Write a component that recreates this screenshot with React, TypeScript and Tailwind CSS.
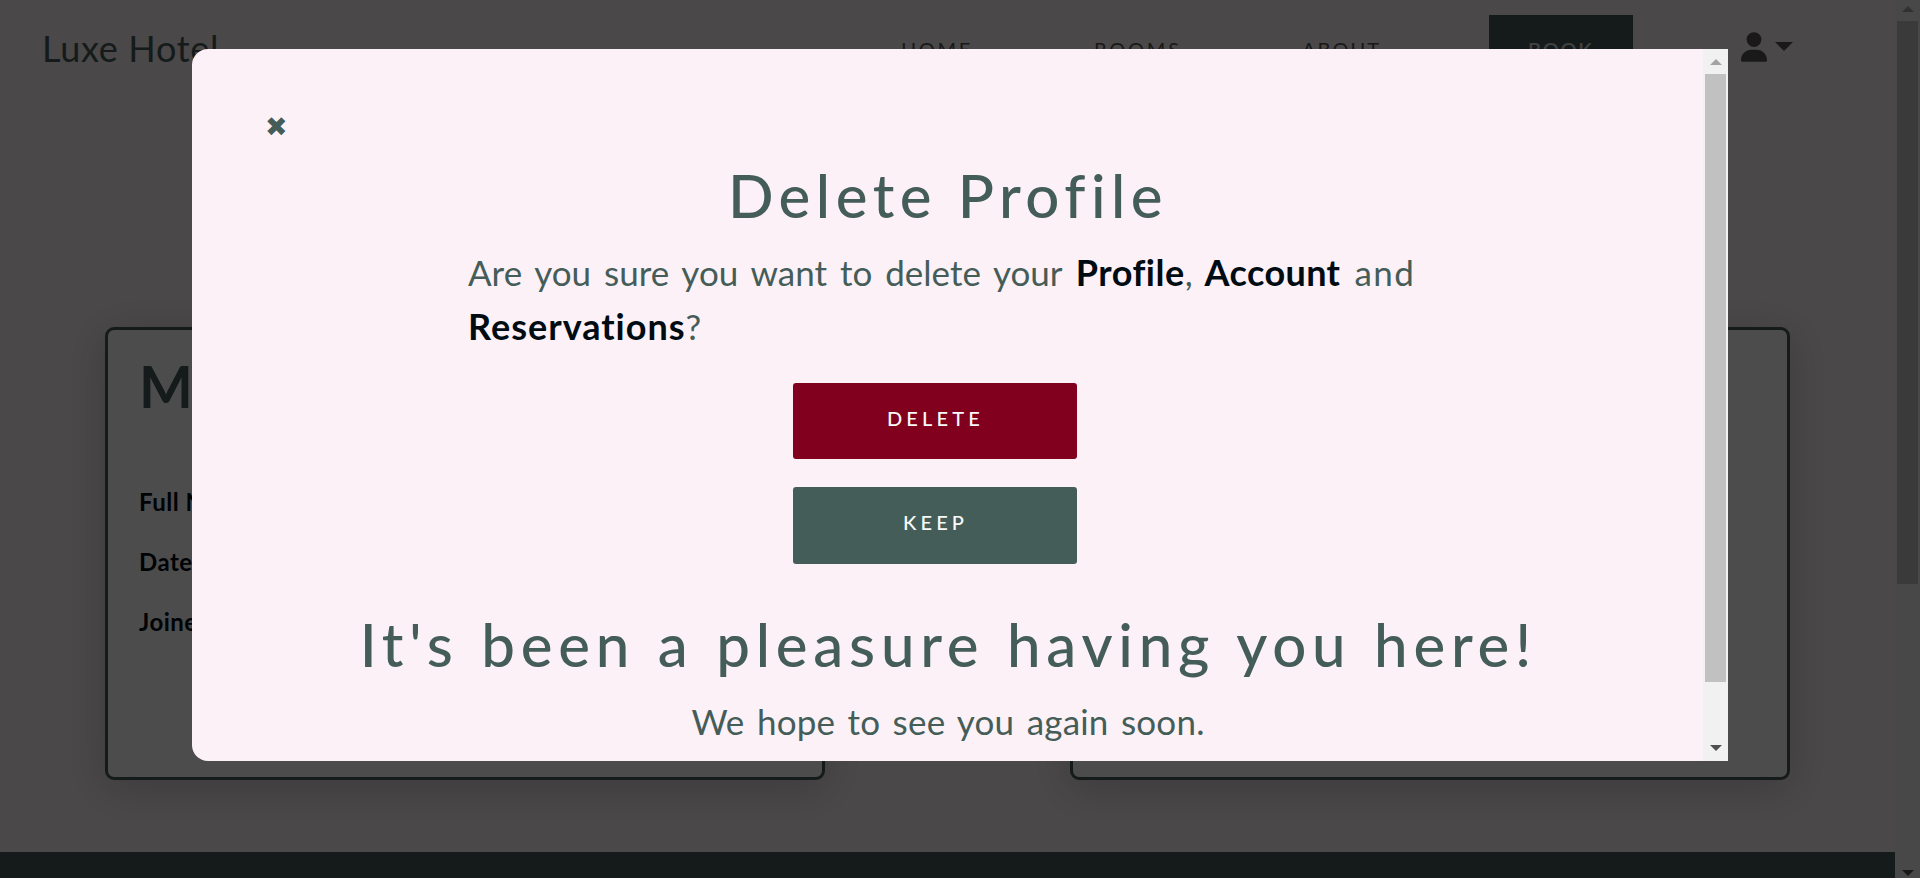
import React from "react";
import { FaUser } from "react-icons/fa6";

function Triangle({ up = false, className }: { up?: boolean; className: string }) {
  return (
    <svg viewBox="0 0 12 7" className={className} fill="currentColor" preserveAspectRatio="none">
      <path d={up ? "M6 0L12 7H0z" : "M6 7L0 0H12z"} />
    </svg>
  );
}

function Header() {
  return (
    <header className="flex h-[120px] items-start text-[20px] leading-[30px] text-[#555]">
      <div className="w-[901px] pt-[21px] pl-[42px] text-[36px] leading-[54px] tracking-[0.7px] text-[#455d58]">
        Luxe Hotel
      </div>
      <nav className="flex items-start">
        <a className="w-[193px] pt-[34px] tracking-[2.6px]">HOME</a>
        <a className="w-[208px] pt-[34px] tracking-[2.8px]">ROOMS</a>
        <a className="w-[187px] pt-[34px] tracking-[2px]">ABOUT</a>
        <a className="mt-[15px] h-[66px] w-[144px] bg-[#455d58] pt-[19px] pl-[39px] font-semibold tracking-[1.7px] text-[#d8dcdb]">
          BOOK
        </a>
      </nav>
      <div className="ml-[108px] flex items-start pt-[32px] text-[#555]">
        <FaUser className="h-[30px] w-[26px]" />
        <Triangle className="mt-[10px] ml-[8px] h-[9px] w-[18px]" />
      </div>
    </header>
  );
}

function Card({ children }: { children?: React.ReactNode }) {
  return (
    <section className="h-[453px] w-[720px] rounded-[9px] border-[3px] border-[#455d58] bg-white pt-[20px] pl-[31px] shadow-[0_8px_40px_rgba(0,0,0,0.2)]">
      {children}
    </section>
  );
}

function Profile() {
  return (
    <main className="flex h-[732px] gap-[245px] pt-[207px] pl-[105px]">
      <Card>
        <h2 className="mb-[50px] text-[57px] leading-[72px] font-bold text-[#455d58]">My Profile</h2>
        <div className="text-[24px] leading-[60px] font-bold tracking-[0.5px] text-[#000b12]">
          <p>Full Name:</p>
          <p>Date of Birth:</p>
          <p>Joined:</p>
        </div>
      </Card>
      <Card />
    </main>
  );
}

function Modal() {
  return (
    <div className="flex h-[712px] w-[1536px] overflow-hidden rounded-l-[16px] bg-[#fcf1f7]">
      <div className="flex h-full w-[1511px] flex-col overflow-hidden text-[#455d58]">
        <button className="mt-[59px] ml-[73px] h-[38px] w-[26px] text-left font-['DejaVu_Sans'] text-[27px] leading-[38px]">
          ✖
        </button>
        <h1 className="mt-[13px] pl-[1px] text-center text-[60px] leading-[72px] font-medium tracking-[5.5px]">
          Delete Profile
        </h1>
        <p className="mt-[14px] ml-[276px] text-[35px] leading-[54px] whitespace-nowrap">
          <span className="[word-spacing:4px]">Are you sure you want to delete your </span>
          <b className="ml-[1px] text-[36px] tracking-[0.5px] text-[#000b12]">Profile</b>,{" "}
          <b className="ml-[3px] text-[36px] tracking-[0.4px] text-[#000b12]">Account</b>{" "}
          <span className="ml-[5px] tracking-[1.5px]">and</span>
          <br />
          <b className="text-[36px] tracking-[1px] text-[#000b12]">Reservations</b>?
        </p>
        <div className="mt-[30px] ml-[601px] flex w-[284px] flex-col gap-[28px] text-center text-[20px] leading-[30px] text-[#f8f9fa]">
          <button className="h-[76px] rounded-[3px] bg-[#80001d] pb-[7px] pl-px font-medium tracking-[4.2px]">DELETE</button>
          <button className="h-[77px] rounded-[3px] bg-[#455d58] pb-[8px] pl-px font-medium tracking-[4.1px]">KEEP</button>
        </div>
        <h1 className="mt-[44px] pl-[2px] text-center text-[60px] leading-[72px] font-medium tracking-[5.75px] whitespace-nowrap [word-spacing:1.8px]">
          It's been a pleasure having you here!
        </h1>
        <p className="mt-[14px] pl-px text-center text-[35px] leading-[54px] tracking-[0.2px] [word-spacing:3.2px]">
          We hope to see you again soon.
        </p>
      </div>
      <div className="flex w-[25px] flex-col items-center bg-[#f1f1f1]">
        <Triangle up className="mt-[10px] h-[6px] w-[12px] text-[#a3a3a3]" />
        <div className="mt-[9px] h-[608px] w-[21px] bg-[#c1c1c1]" />
        <Triangle className="mt-[63px] h-[6px] w-[12px] text-[#505050]" />
      </div>
    </div>
  );
}

export default function App() {
  return (
    <div className="relative h-[878px] w-[1920px] overflow-hidden font-['Lato',sans-serif]">
      <div className="flex h-full">
        <div className="w-[1895px] bg-[#fbf1f4]">
          <Header />
          <Profile />
          <footer className="h-[26px] bg-[#455d58]" />
        </div>
        <div className="flex w-[25px] flex-col items-center bg-[#f1f1f1]">
          <Triangle up className="mt-[6px] h-[6px] w-[12px] text-[#a3a3a3]" />
          <div className="mt-[9px] h-[563px] w-[21px] bg-[#c1c1c1]" />
          <Triangle className="mt-[286px] h-[6px] w-[12px] text-[#505050]" />
        </div>
      </div>
      <div className="absolute inset-0 bg-black/70 pt-[49px] pl-[192px]">
        <Modal />
      </div>
    </div>
  );
}
